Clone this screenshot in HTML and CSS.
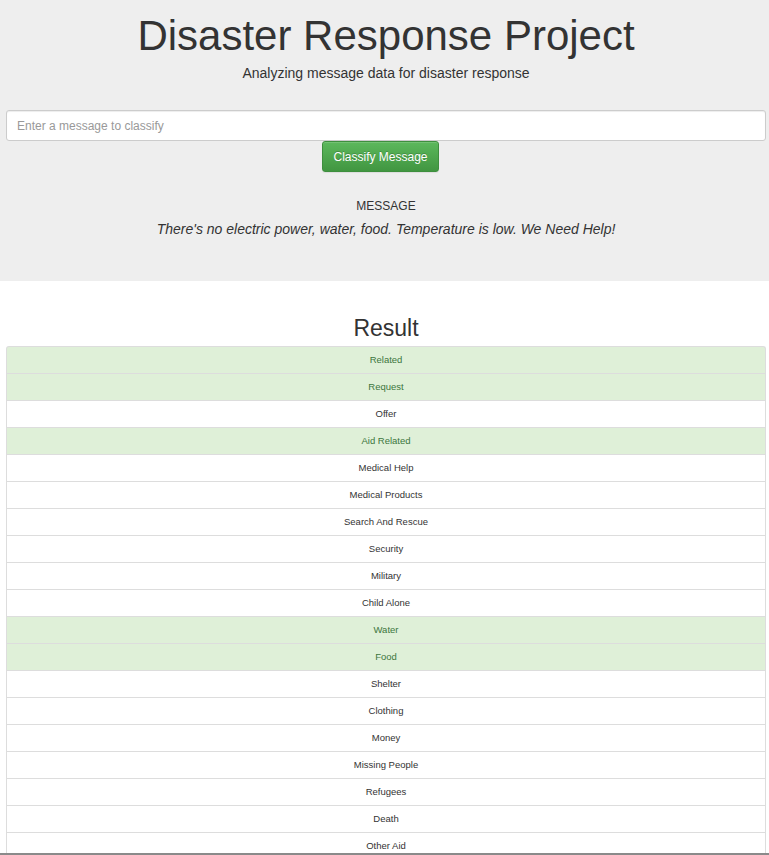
FILE: index.html
```html
<!DOCTYPE html>
<html lang="en">
<head>
<meta charset="utf-8">
<title>Disaster Response Project</title>
<link rel="stylesheet" href="styles.css">
</head>
<body>
<div class="jumbotron">
  <h1 class="title">Disaster Response Project</h1>
  <p class="subtitle">Analyzing message data for disaster response</p>
  <form class="classify-form">
    <input class="query" type="text" placeholder="Enter a message to classify">
    <button class="btn-classify" type="button">Classify Message</button>
  </form>
  <div class="message-block">
    <div class="message-label">MESSAGE</div>
    <div class="message-text">There's no electric power, water, food. Temperature is low. We Need Help!</div>
  </div>
</div>
<div class="results">
  <h2 class="result-title">Result</h2>
  <ul class="list-group">
    <li class="item success">Related</li>
    <li class="item success">Request</li>
    <li class="item">Offer</li>
    <li class="item success">Aid Related</li>
    <li class="item">Medical Help</li>
    <li class="item">Medical Products</li>
    <li class="item">Search And Rescue</li>
    <li class="item">Security</li>
    <li class="item">Military</li>
    <li class="item">Child Alone</li>
    <li class="item success">Water</li>
    <li class="item success">Food</li>
    <li class="item">Shelter</li>
    <li class="item">Clothing</li>
    <li class="item">Money</li>
    <li class="item">Missing People</li>
    <li class="item">Refugees</li>
    <li class="item">Death</li>
    <li class="item">Other Aid</li>
    <li class="item">Infrastructure Related</li>
    <li class="item">Transport</li>
    <li class="item">Buildings</li>
    <li class="item">Electricity</li>
    <li class="item">Tools</li>
    <li class="item">Hospitals</li>
    <li class="item">Shops</li>
    <li class="item">Aid Centers</li>
    <li class="item">Other Infrastructure</li>
    <li class="item">Weather Related</li>
    <li class="item">Floods</li>
    <li class="item">Storm</li>
    <li class="item">Fire</li>
    <li class="item">Earthquake</li>
    <li class="item">Cold</li>
    <li class="item">Other Weather</li>
    <li class="item">Direct Report</li>
  </ul>
</div>
<div class="window-edge"></div>
</body>
</html>
```
FILE: styles.css
```css
html, body {
  margin: 0;
  padding: 0;
}
body {
  font-family: "Liberation Sans", Arial, sans-serif;
  color: #333;
  background: #fff;
}
.jumbotron {
  background: #eee;
  height: 281px;
  box-sizing: border-box;
  padding: 13px 3px 0 6px;
  display: flex;
  flex-direction: column;
  align-items: stretch;
}
.title {
  margin: 0;
  font-size: 42px;
  line-height: 46px;
  font-weight: 400;
  text-align: center;
  color: #333;
}
.subtitle {
  margin: 4px 0 0;
  font-size: 14px;
  line-height: 20px;
  text-align: center;
}
.classify-form {
  margin-top: 27px;
  display: flex;
  flex-direction: column;
  align-items: center;
}
.query {
  width: 100%;
  box-sizing: border-box;
  height: 31px;
  margin: 0;
  padding: 4px 10px;
  border: 1px solid #ccc;
  border-radius: 3px;
  background: #fff;
  font-family: "Liberation Sans", Arial, sans-serif;
  font-size: 12px;
  color: #555;
  box-shadow: inset 0 1px 1px rgba(0,0,0,0.075);
}
.query::placeholder {
  color: #999;
}
.btn-classify {
  margin: 0 11px 0 0;
  height: 31px;
  width: 117px;
  box-sizing: border-box;
  padding: 0;
  border: 1px solid #3e8f3e;
  border-radius: 3px;
  background: linear-gradient(to bottom, #5cb85c 0%, #419641 100%);
  color: #fff;
  font-family: "Liberation Sans", Arial, sans-serif;
  font-size: 12px;
  text-shadow: 0 -1px 0 rgba(0,0,0,0.2);
  box-shadow: inset 0 1px 0 rgba(255,255,255,0.15), 0 1px 1px rgba(0,0,0,0.075);
}
.message-block {
  margin-top: 26px;
  text-align: center;
}
.message-label {
  font-size: 12px;
  line-height: 16px;
}
.message-text {
  margin-top: 5px;
  font-size: 14px;
  line-height: 20px;
  font-style: italic;
}
.results {
  padding: 0 3px 0 6px;
}
.result-title {
  margin: 30px 0 0;
  font-size: 23px;
  line-height: 35px;
  font-weight: 400;
  text-align: center;
}
.list-group {
  list-style: none;
  margin: 0;
  padding: 0;
}
.item {
  height: 26px;
  border: 1px solid #ddd;
  border-bottom: none;
  background: #fff;
  color: #333;
  font-size: 9.5px;
  line-height: 26px;
  text-align: center;
}
.item:first-child {
  border-radius: 3px 3px 0 0;
}
.item:last-child {
  border-bottom: 1px solid #ddd;
}
.item.success {
  background: #dff0d8;
  color: #3c763d;
}
.window-edge {
  position: fixed;
  left: 0;
  right: 0;
  bottom: 0;
  height: 2px;
  background: #8a8a8a;
}
```
